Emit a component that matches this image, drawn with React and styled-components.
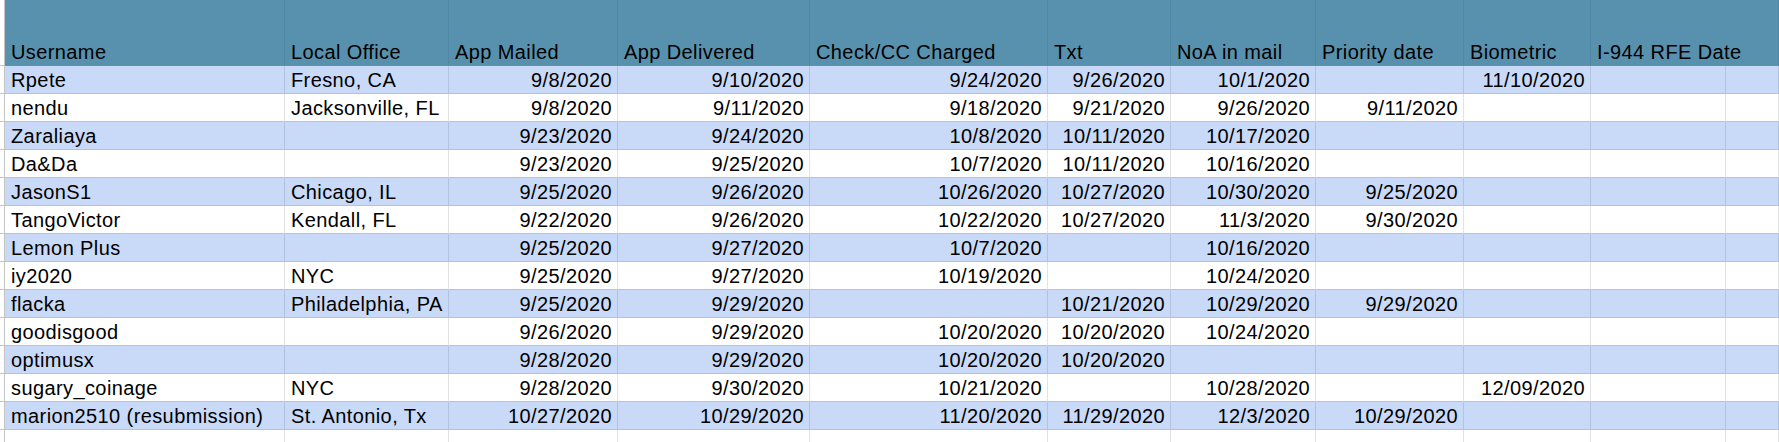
import React from "react";
import styled, { createGlobalStyle } from "styled-components";

const GlobalStyle = createGlobalStyle`
  html, body {
    margin: 0;
    padding: 0;
    background: #ffffff;
    overflow: hidden;
  }
  body {
    font-family: "Liberation Sans", Arial, sans-serif;
  }
`;

const COLUMNS =
  "5px 280px 164px 169px 192px 238px 123px 145px 148px 127px 135px 1fr";

const Sheet = styled.div`
  display: flex;
  flex-direction: column;
  width: 100%;
  height: 442px;
  overflow: hidden;
  background: #ffffff;
`;

const HeaderRow = styled.div`
  display: grid;
  grid-template-columns: ${COLUMNS};
  grid-template-rows: 66px;
  height: 66px;
  flex: none;
`;

const Row = styled.div`
  display: grid;
  grid-template-columns: ${COLUMNS};
  grid-template-rows: 28px;
  height: 28px;
  flex: none;
  background: ${(p) => (p.$band ? "#c9daf8" : "#ffffff")};
`;

const Gutter = styled.div`
  box-sizing: border-box;
  background: #ffffff;
  border-right: 1px solid #c4c4c4;
  border-bottom: 1px solid #c4c4c4;
`;

const HeaderCell = styled.div`
  box-sizing: border-box;
  grid-column: ${(p) => (p.$span ? `span ${p.$span}` : "auto")};
  display: flex;
  align-items: flex-end;
  padding: 0 5px 3px 6px;
  background: #5891ae;
  border-right: 1px solid #4f87a4;
  border-bottom: 1px solid #5c93b0;
  color: #000000;
  font-size: 20px;
  line-height: 20px;
  letter-spacing: 0.4px;
  white-space: nowrap;
  overflow: visible;
`;

const Cell = styled.div`
  box-sizing: border-box;
  display: flex;
  align-items: flex-end;
  justify-content: ${(p) => (p.$num ? "flex-end" : "flex-start")};
  padding: 0 5px 3px 6px;
  border-right: 1px solid ${(p) => (p.$band ? "#b2c3df" : "#e2e2e2")};
  border-bottom: 1px solid #b4c3dc;
  color: #000000;
  font-size: 20px;
  line-height: 20px;
  letter-spacing: 0.4px;
  white-space: nowrap;
  overflow: visible;
`;

const EmptyCell = styled.div`
  box-sizing: border-box;
  border-right: 1px solid #e2e2e2;
  border-bottom: 1px solid #e2e2e2;
`;

const headers = [
  "Username",
  "Local Office",
  "App Mailed",
  "App Delivered",
  "Check/CC Charged",
  "Txt",
  "NoA in mail",
  "Priority date",
  "Biometric",
];

const rows = [
  ["Rpete", "Fresno, CA", "9/8/2020", "9/10/2020", "9/24/2020", "9/26/2020", "10/1/2020", "", "11/10/2020", ""],
  ["nendu", "Jacksonville, FL", "9/8/2020", "9/11/2020", "9/18/2020", "9/21/2020", "9/26/2020", "9/11/2020", "", ""],
  ["Zaraliaya", "", "9/23/2020", "9/24/2020", "10/8/2020", "10/11/2020", "10/17/2020", "", "", ""],
  ["Da&Da", "", "9/23/2020", "9/25/2020", "10/7/2020", "10/11/2020", "10/16/2020", "", "", ""],
  ["JasonS1", "Chicago, IL", "9/25/2020", "9/26/2020", "10/26/2020", "10/27/2020", "10/30/2020", "9/25/2020", "", ""],
  ["TangoVictor", "Kendall, FL", "9/22/2020", "9/26/2020", "10/22/2020", "10/27/2020", "11/3/2020", "9/30/2020", "", ""],
  ["Lemon Plus", "", "9/25/2020", "9/27/2020", "10/7/2020", "", "10/16/2020", "", "", ""],
  ["iy2020", "NYC", "9/25/2020", "9/27/2020", "10/19/2020", "", "10/24/2020", "", "", ""],
  ["flacka", "Philadelphia, PA", "9/25/2020", "9/29/2020", "", "10/21/2020", "10/29/2020", "9/29/2020", "", ""],
  ["goodisgood", "", "9/26/2020", "9/29/2020", "10/20/2020", "10/20/2020", "10/24/2020", "", "", ""],
  ["optimusx", "", "9/28/2020", "9/29/2020", "10/20/2020", "10/20/2020", "", "", "", ""],
  ["sugary_coinage", "NYC", "9/28/2020", "9/30/2020", "10/21/2020", "", "10/28/2020", "", "12/09/2020", ""],
  ["marion2510 (resubmission)", "St. Antonio, Tx", "10/27/2020", "10/29/2020", "11/20/2020", "11/29/2020", "12/3/2020", "10/29/2020", "", ""],
];

export default function App() {
  return (
    <>
      <GlobalStyle />
      <Sheet>
        <HeaderRow>
          <Gutter />
          {headers.map((h) => (
            <HeaderCell key={h}>{h}</HeaderCell>
          ))}
          <HeaderCell $span={2}>I-944 RFE Date</HeaderCell>
        </HeaderRow>
        {rows.map((r, i) => {
          const band = i % 2 === 0;
          return (
            <Row key={i} $band={band}>
              <Gutter />
              {r.map((v, j) => (
                <Cell key={j} $band={band} $num={j >= 2}>
                  {v}
                </Cell>
              ))}
              <Cell $band={band} />
            </Row>
          );
        })}
        {[0, 1].map((k) => (
          <Row key={`e${k}`}>
            <Gutter />
            {Array.from({ length: 11 }).map((_, j) => (
              <EmptyCell key={j} />
            ))}
          </Row>
        ))}
      </Sheet>
    </>
  );
}
